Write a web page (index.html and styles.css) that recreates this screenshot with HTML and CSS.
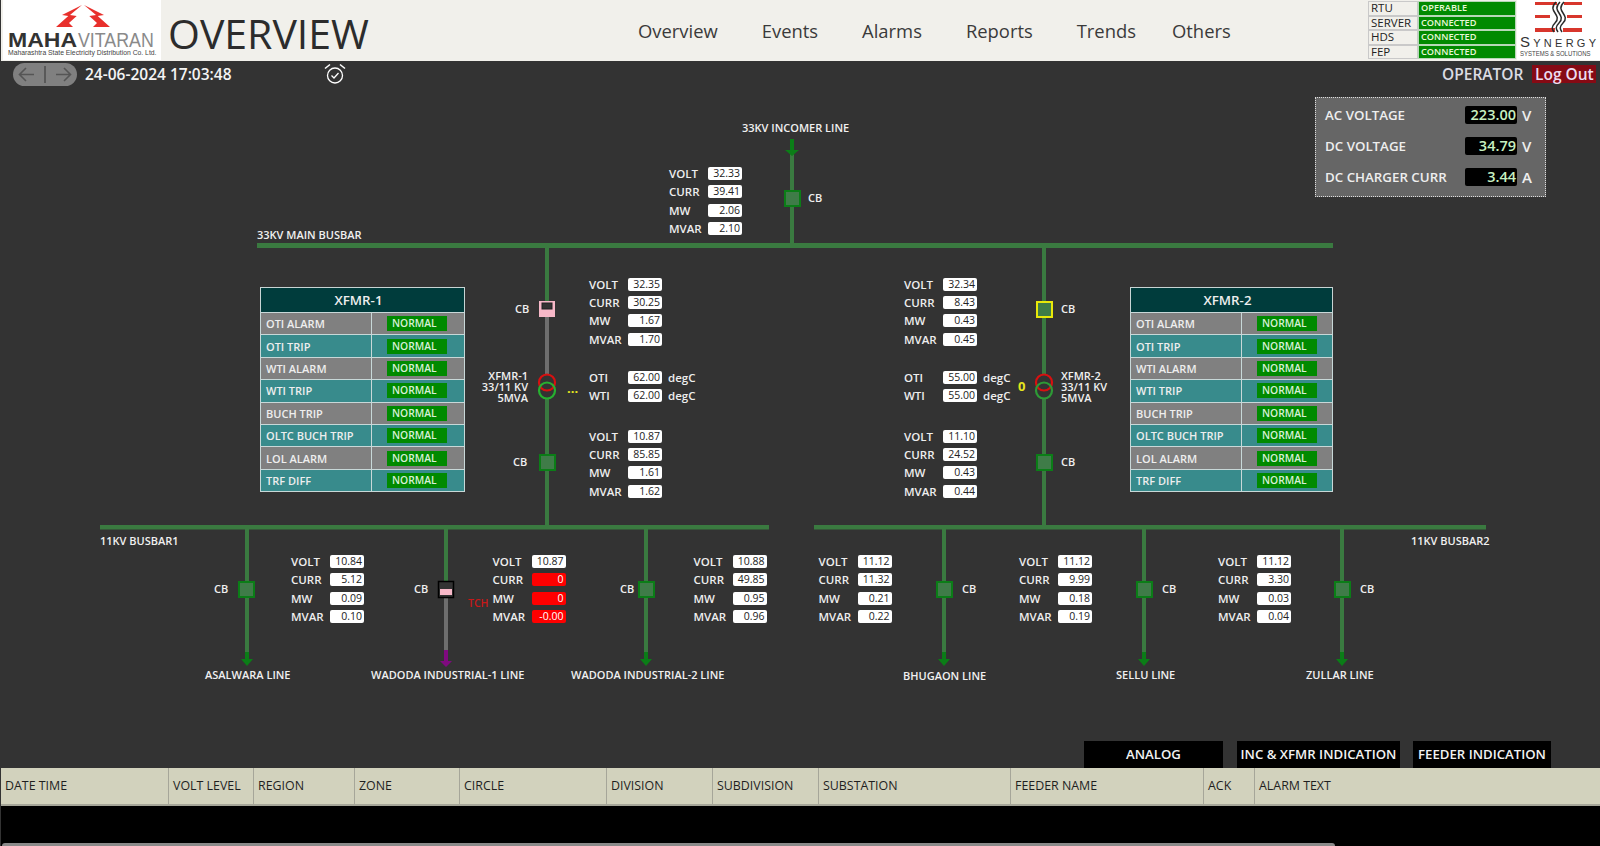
FILE: index.html
```html
<!DOCTYPE html>
<html lang="en">
<head>
<meta charset="utf-8">
<title>Overview</title>
<link rel="stylesheet" href="styles.css">
</head>
<body>
<div class="page">
  <header class="topbar">
    <svg class="logo" width="158" height="60" viewBox="0 0 158 60">
      <rect width="158" height="60" fill="#fff"/>
      <polygon fill="#e8302c" points="79,5 59,15 65.300,16 53,27 70,27 66,23 73.700,16 67,15"/>
      <polygon fill="#e8302c" points="81,5 101,15 94.700,16 107,27 90,27 94,23 86.300,16 93,15"/>
      <text class="maha" x="5" y="47" textLength="69" lengthAdjust="spacingAndGlyphs">MAHA</text>
      <text class="vitaran" transform="translate(75 47) scale(.89 1)">VITARAN</text>
      <text class="mahasub" x="5" y="55">Maharashtra State Electricity Distribution Co. Ltd.</text>
    </svg>
    <h1 class="title">OVERVIEW</h1>
    <nav class="nav">
      <a>Overview</a><a>Events</a><a>Alarms</a><a>Reports</a><a>Trends</a><a class="nav-last">Others</a>
    </nav>
    <div class="status">
      <span class="st-l">RTU</span><span class="st-v">OPERABLE</span>
      <span class="st-l">SERVER</span><span class="st-v">CONNECTED</span>
      <span class="st-l">HDS</span><span class="st-v">CONNECTED</span>
      <span class="st-l">FEP</span><span class="st-v">CONNECTED</span>
    </div>
    <svg class="synergy" width="83" height="60" viewBox="0 0 83 60">
      <rect width="83" height="60" fill="#fff"/>
      <g fill="#d8362c">
        <rect x="18" y="2" width="22" height="3"/><rect x="47" y="2" width="18" height="3"/>
        <rect x="18" y="15" width="15" height="3"/><rect x="50" y="15" width="15" height="3"/>
        <rect x="18" y="28" width="20" height="4"/><rect x="46" y="28" width="19" height="4"/>
      </g>
      <g fill="none" stroke="#2a2a2a" stroke-width="1.500">
        <path d="M39 2c-5 5-3 8-1 11s4 6 0 10-3 6-1 9"/>
        <path d="M43 2c-5 5-3 8-1 11s4 6 0 10-3 6-1 9"/>
        <path d="M47 2c-5 5-3 8-1 11s4 6 0 10-3 6-1 9"/>
      </g>
      <text class="syn1" x="3" y="47" textLength="76" lengthAdjust="spacing"><tspan class="syn1b">S</tspan>YNERGY</text>
      <text class="syn2" transform="translate(3 56) scale(.8 1)">SYSTEMS &amp; SOLUTIONS</text>
    </svg>
  </header>

  <div class="toolbar">
    <div class="pill">
      <svg width="64" height="23" viewBox="0 0 64 23">
        <g fill="none" stroke="#555" stroke-width="1.600">
          <path d="M21 11.500H7M13 5l-6.500 6.500L13 18"/>
          <path d="M32 3v17" stroke-width="1.800"/>
          <path d="M43 11.500h14M51 5l6.500 6.500L51 18"/>
        </g>
      </svg>
    </div>
    <span class="clock">24-06-2024 17:03:48</span>
    <svg class="alarm" width="24" height="24" viewBox="0 0 24 24">
      <g fill="none" stroke="#fff" stroke-width="1.300">
        <circle cx="12" cy="13.500" r="7.500"/>
        <path d="M8.500 13.500l2.500 2.500 4.500-5"/>
        <path d="M2 6.500l5-4M22 6.500l-5-4" stroke-width="1.600"/>
      </g>
    </svg>
    <span class="operator">OPERATOR</span>
    <span class="logout">Log Out</span>
  </div>

  <div class="spacer"></div>

  <div class="tabs">
    <span class="tab tab-analog">ANALOG</span>
    <span class="tab tab-inc">INC &amp; XFMR INDICATION</span>
    <span class="tab tab-feeder">FEEDER INDICATION</span>
  </div>

  <div class="alarmhead">
    <span>DATE TIME</span><span>VOLT LEVEL</span><span>REGION</span><span>ZONE</span><span>CIRCLE</span><span>DIVISION</span><span>SUBDIVISION</span><span>SUBSTATION</span><span>FEEDER NAME</span><span>ACK</span><span>ALARM TEXT</span>
  </div>
  <div class="alarmbody"><div class="scrollthumb"></div></div>

  <svg class="sld" width="1600" height="846" viewBox="0 0 1600 846">
    <g fill="#3a7a40">
      <rect x="257" y="243" width="1076" height="5"/>
      <rect x="100" y="525" width="669" height="4.500"/>
      <rect x="814" y="525" width="672" height="4.500"/>
      <rect x="790" y="153" width="4" height="90"/>
      <rect x="545" y="248" width="4" height="54"/>
      <rect x="545" y="398" width="4" height="127"/>
      <rect x="1042" y="248" width="4" height="127"/>
      <rect x="1042" y="398" width="4" height="127"/>
      <rect x="245" y="529" width="4" height="130"/>
      <rect x="444" y="529" width="4" height="54"/>
      <rect x="644" y="529" width="4" height="130"/>
      <rect x="942" y="529" width="4" height="130"/>
      <rect x="1142" y="529" width="4" height="130"/>
      <rect x="1340" y="529" width="4" height="130"/>
    </g>
    <rect x="545" y="316" width="4" height="59" fill="#6e6e6e"/>
    <rect x="444" y="596" width="4" height="56" fill="#6e6e6e"/>
    <g fill="#0b7d17">
      <path d="M790 139h4v11h5l-7 6-7-6h5z"/>
      <path d="M245 652h4v7h4l-6 7-6-7h4z"/>
      <path d="M644 652h4v7h4l-6 7-6-7h4z"/>
      <path d="M942 652h4v7h4l-6 7-6-7h4z"/>
      <path d="M1142 652h4v7h4l-6 7-6-7h4z"/>
      <path d="M1340 652h4v7h4l-6 7-6-7h4z"/>
    </g>
    <path d="M444 650h4v11h4l-6 6-6-6h4z" fill="#7f0a7f"/>
    <g class="cb">
      <rect x="785" y="191" width="15" height="15"/>
      <rect x="540" y="455" width="15" height="15"/>
      <rect x="1037" y="455" width="15" height="15"/>
      <rect x="239" y="582" width="15" height="15"/>
      <rect x="639" y="582" width="15" height="15"/>
      <rect x="937" y="582" width="15" height="15"/>
      <rect x="1137" y="582" width="15" height="15"/>
      <rect x="1335" y="582" width="15" height="15"/>
    </g>
    <rect x="1037" y="302" width="15" height="15" fill="#3f7c48" stroke="#e8e80a" stroke-width="2"/>
    <rect x="539" y="301" width="16" height="16" fill="#f7b8c8"/>
    <rect x="542" y="303" width="10" height="6" fill="#333" stroke="#222"/>
    <rect x="438.500" y="581.500" width="15" height="16" fill="#333" stroke="#000" stroke-width="1.500"/>
    <rect x="440" y="589" width="12" height="6" fill="#f7b8c8"/>
    <g fill="none" stroke-width="2.200">
      <circle cx="547" cy="382.500" r="8" stroke="#d81010"/>
      <circle cx="547" cy="390.500" r="8" stroke="#27b030"/>
      <circle cx="1044" cy="382.500" r="8" stroke="#d81010"/>
      <circle cx="1044" cy="390.500" r="8" stroke="#2e9a36"/>
    </g>
    <g class="lbl">
      <text x="742" y="132">33KV INCOMER LINE</text>
      <text x="257" y="239">33KV MAIN BUSBAR</text>
      <text x="100" y="545">11KV BUSBAR1</text>
      <text x="1411" y="545">11KV BUSBAR2</text>
      <text x="808" y="202">CB</text>
      <text x="515" y="313">CB</text>
      <text x="513" y="466">CB</text>
      <text x="1061" y="313">CB</text>
      <text x="1061" y="466">CB</text>
      <text x="214" y="593">CB</text>
      <text x="414" y="593">CB</text>
      <text x="620" y="593">CB</text>
      <text x="962" y="593">CB</text>
      <text x="1162" y="593">CB</text>
      <text x="1360" y="593">CB</text>
      <text x="205" y="679">ASALWARA LINE</text>
      <text x="371" y="679">WADODA INDUSTRIAL-1 LINE</text>
      <text x="571" y="679">WADODA INDUSTRIAL-2 LINE</text>
      <text x="903" y="680">BHUGAON LINE</text>
      <text x="1116" y="679">SELLU LINE</text>
      <text x="1306" y="679">ZULLAR LINE</text>
    </g>
    <text class="yel" x="567" y="393">...</text>
    <text class="yel" x="1018" y="391">0</text>
    <text class="tch" x="468" y="607">TCH</text>
  </svg>

  <div class="xlabel xl1">XFMR-1<br>33/11 KV<br>5MVA</div>
  <div class="xlabel xl2">XFMR-2<br>33/11 KV<br>5MVA</div>

  <div class="meas m-inc"><span>VOLT</span><b>32.33</b><span>CURR</span><b>39.41</b><span>MW</span><b>2.06</b><span>MVAR</span><b>2.10</b></div>
  <div class="meas m-t1u"><span>VOLT</span><b>32.35</b><span>CURR</span><b>30.25</b><span>MW</span><b>1.67</b><span>MVAR</span><b>1.70</b></div>
  <div class="meas m-t1t"><span>OTI</span><b>62.00</b><i>degC</i><span>WTI</span><b>62.00</b><i>degC</i></div>
  <div class="meas m-t1l"><span>VOLT</span><b>10.87</b><span>CURR</span><b>85.85</b><span>MW</span><b>1.61</b><span>MVAR</span><b>1.62</b></div>
  <div class="meas m-t2u"><span>VOLT</span><b>32.34</b><span>CURR</span><b>8.43</b><span>MW</span><b>0.43</b><span>MVAR</span><b>0.45</b></div>
  <div class="meas m-t2t"><span>OTI</span><b>55.00</b><i>degC</i><span>WTI</span><b>55.00</b><i>degC</i></div>
  <div class="meas m-t2l"><span>VOLT</span><b>11.10</b><span>CURR</span><b>24.52</b><span>MW</span><b>0.43</b><span>MVAR</span><b>0.44</b></div>
  <div class="meas m-f1"><span>VOLT</span><b>10.84</b><span>CURR</span><b>5.12</b><span>MW</span><b>0.09</b><span>MVAR</span><b>0.10</b></div>
  <div class="meas m-f2"><span>VOLT</span><b>10.87</b><span>CURR</span><b class="bad">0</b><span>MW</span><b class="bad">0</b><span>MVAR</span><b class="bad">-0.00</b></div>
  <div class="meas m-f3"><span>VOLT</span><b>10.88</b><span>CURR</span><b>49.85</b><span>MW</span><b>0.95</b><span>MVAR</span><b>0.96</b></div>
  <div class="meas m-f4"><span>VOLT</span><b>11.12</b><span>CURR</span><b>11.32</b><span>MW</span><b>0.21</b><span>MVAR</span><b>0.22</b></div>
  <div class="meas m-f5"><span>VOLT</span><b>11.12</b><span>CURR</span><b>9.99</b><span>MW</span><b>0.18</b><span>MVAR</span><b>0.19</b></div>
  <div class="meas m-f6"><span>VOLT</span><b>11.12</b><span>CURR</span><b>3.30</b><span>MW</span><b>0.03</b><span>MVAR</span><b>0.04</b></div>

  <table class="xfmr x1">
    <colgroup><col class="col-name"><col></colgroup>
    <thead><tr><th colspan="2">XFMR-1</th></tr></thead>
    <tbody>
      <tr><td>OTI ALARM</td><td><em>NORMAL</em></td></tr>
      <tr><td>OTI TRIP</td><td><em>NORMAL</em></td></tr>
      <tr><td>WTI ALARM</td><td><em>NORMAL</em></td></tr>
      <tr><td>WTI TRIP</td><td><em>NORMAL</em></td></tr>
      <tr><td>BUCH TRIP</td><td><em>NORMAL</em></td></tr>
      <tr><td>OLTC BUCH TRIP</td><td><em>NORMAL</em></td></tr>
      <tr><td>LOL ALARM</td><td><em>NORMAL</em></td></tr>
      <tr><td>TRF DIFF</td><td><em>NORMAL</em></td></tr>
    </tbody>
  </table>
  <table class="xfmr x2">
    <colgroup><col class="col-name"><col></colgroup>
    <thead><tr><th colspan="2">XFMR-2</th></tr></thead>
    <tbody>
      <tr><td>OTI ALARM</td><td><em>NORMAL</em></td></tr>
      <tr><td>OTI TRIP</td><td><em>NORMAL</em></td></tr>
      <tr><td>WTI ALARM</td><td><em>NORMAL</em></td></tr>
      <tr><td>WTI TRIP</td><td><em>NORMAL</em></td></tr>
      <tr><td>BUCH TRIP</td><td><em>NORMAL</em></td></tr>
      <tr><td>OLTC BUCH TRIP</td><td><em>NORMAL</em></td></tr>
      <tr><td>LOL ALARM</td><td><em>NORMAL</em></td></tr>
      <tr><td>TRF DIFF</td><td><em>NORMAL</em></td></tr>
    </tbody>
  </table>

  <div class="supply">
    <span>AC VOLTAGE</span><b>223.00</b><i>V</i>
    <span>DC VOLTAGE</span><b>34.79</b><i>V</i>
    <span>DC CHARGER CURR</span><b>3.44</b><i>A</i>
  </div>
</div>
</body>
</html>
```

FILE: styles.css
```css
* { box-sizing: border-box; }
html, body { margin: 0; padding: 0; background: #333; }
body { font-family: "Open Sans", "Liberation Sans", sans-serif; }

.page {
  position: relative;
  width: 1600px;
  height: 846px;
  overflow: hidden;
  display: flex;
  flex-direction: column;
  background: #333;
  padding-left: 1px;
}

/* header */
.topbar {
  height: 61px;
  flex: none;
  display: flex;
  align-items: flex-start;
  background: #f1f0eb;
}
.logo { margin-left: 2px; flex: none; }
.maha { font: 800 20px "Liberation Sans", sans-serif; fill: #333; }
.vitaran { font: 400 20px "Liberation Sans", sans-serif; fill: #8a8a8a; }
.mahasub { font: 400 6.800px "Liberation Sans", sans-serif; fill: #444; }
.syn1b { font-size: 15px; }
.title {
  margin: 6px 0 0 7px;
  width: 199px;
  flex: none;
  font-size: 41px;
  line-height: 54px;
  font-weight: 400;
  color: #2c2c2c;
  white-space: nowrap;
}
.nav {
  display: flex;
  gap: 44px;
  margin: 18px 0 0 271px;
  font-size: 18.400px;
  line-height: 26px;
  color: #3a3a3a;
}
.nav-last { margin-left: -8px; }
.status {
  width: 148px;
  margin: 1px 0 0 auto;
  display: grid;
  grid-template-columns: 50px 98px;
  grid-auto-rows: 14.500px;
  font-size: 11.500px;
  line-height: 12px;
  flex: none;
}
.st-l { border: 1px solid #c9c9c9; padding-left: 2px; color: #222; white-space: nowrap; }
.st-v {
  background: #008a00;
  border: 1px solid #b6d8b6;
  color: #e8f8d8;
  padding-left: 2px;
  font-size: 9.200px;
  font-weight: 600;
  white-space: nowrap;
}
.synergy { margin-left: 1px; flex: none; }
.syn1 { font: 400 11px "Liberation Sans", sans-serif; fill: #333; }
.syn2 { font: 400 7.500px "Liberation Sans", sans-serif; fill: #444; }

/* toolbar */
.toolbar {
  height: 26px;
  flex: none;
  display: flex;
  align-items: center;
  color: #fff;
  padding-left: 12px;
}
.pill {
  width: 64px;
  height: 23px;
  border-radius: 12px;
  background: #808080;
  flex: none;
  display: flex;
}
.clock {
  margin-left: 8px;
  width: 166px;
  font-size: 15.500px;
  font-weight: 600;
  white-space: nowrap;
  color: #f4f4f4;
}
.alarm { margin-left: 72px; flex: none; }
.operator {
  margin-left: 1095px;
  font-size: 15.500px;
  font-weight: 600;
  color: #dcdce4;
  white-space: nowrap;
}
.logout {
  margin-left: 9px;
  width: 64px;
  height: 18px;
  line-height: 18px;
  background: #860a14;
  color: #ecdcf0;
  font-size: 15.500px;
  font-weight: 600;
  text-align: center;
  white-space: nowrap;
  flex: none;
}
.spacer { flex: 1; }

/* tabs */
.tabs {
  display: flex;
  height: 27px;
  flex: none;
  padding-left: 1083px;
}
.tab {
  background: #000;
  color: #f2f2f2;
  font-size: 13.200px;
  font-weight: 600;
  line-height: 27px;
  text-align: center;
  white-space: nowrap;
}
.tab-analog { width: 139px; }
.tab-inc { width: 163px; margin-left: 14px; }
.tab-feeder { width: 138px; margin-left: 13px; }

/* alarm table */
.alarmhead {
  height: 38px;
  flex: none;
  display: grid;
  grid-template-columns: 168px 85px 101px 105px 147px 106px 106px 192px 193px 51px 1fr;
  background: #d2d2bd;
  border-bottom: 2px solid #a6a699;
  font-size: 12.400px;
  line-height: 36px;
  color: #1f1f1f;
}
.alarmhead span { padding-left: 4px; border-right: 1px solid #a6a699; white-space: nowrap; }
.alarmhead span:last-child { border-right: 0; }
.alarmbody { height: 40px; flex: none; background: #000; position: relative; }
.scrollthumb {
  position: absolute;
  left: 1px;
  bottom: 0;
  width: 1333px;
  height: 3px;
  background: #8a8a8a;
  border-radius: 3px 3px 0 0;
}

/* single line diagram */
.sld { position: absolute; left: 0; top: 0; }
.cb rect { fill: #3f7c48; stroke: #0b7d17; stroke-width: 2; }
.lbl text { font-family: "Open Sans", sans-serif; font-size: 11px; font-weight: 600; fill: #f0f0f0; }
.yel { font: 700 13px "Open Sans", sans-serif; fill: #e6e61e; }
.tch { font: 600 10.500px "Open Sans", sans-serif; fill: #c81818; }

.xlabel {
  position: absolute;
  top: 370px;
  font-size: 11px;
  font-weight: 600;
  line-height: 11px;
  color: #f0f0f0;
  white-space: nowrap;
}
.xl1 { right: 1072px; text-align: right; }
.xl2 { left: 1061px; }

.meas {
  position: absolute;
  display: grid;
  grid-template-columns: 39px 34px;
  grid-auto-rows: 18.300px;
  align-items: center;
  font-size: 11.500px;
  font-weight: 600;
  color: #eee;
}
.meas span { white-space: nowrap; }
.meas b {
  height: 13px;
  line-height: 13px;
  background: #fff;
  color: #222;
  font-size: 10.500px;
  font-weight: 400;
  text-align: right;
  padding-right: 2px;
  border-radius: 2px;
}
.meas b.bad { background: #f00; color: #fff; }
.meas i { font-style: normal; padding-left: 6px; }
.m-t1t, .m-t2t { grid-template-columns: 39px 34px 40px; }

.m-inc { left: 669px; top: 164.500px; }
.m-t1u { left: 589px; top: 275px; }
.m-t1t { left: 589px; top: 368px; }
.m-t1l { left: 589px; top: 427px; }
.m-t2u { left: 904px; top: 275px; }
.m-t2t { left: 904px; top: 368px; }
.m-t2l { left: 904px; top: 427px; }
.m-f1 { left: 291px; top: 552.500px; }
.m-f2 { left: 492.500px; top: 552.500px; }
.m-f3 { left: 693.500px; top: 552.500px; }
.m-f4 { left: 818.500px; top: 552.500px; }
.m-f5 { left: 1019px; top: 552.500px; }
.m-f6 { left: 1218px; top: 552.500px; }

.xfmr {
  position: absolute;
  top: 287px;
  border-collapse: collapse;
  table-layout: fixed;
  border: 1px solid #c8d4d4;
  font-size: 11px;
  font-weight: 600;
  color: #eee;
}
.x1 { left: 260px; width: 205px; }
.x2 { left: 1130px; width: 203px; }
.col-name { width: 111px; }
.xfmr th {
  height: 25px;
  background: #003c3c;
  color: #eee;
  font-size: 13.300px;
  font-weight: 600;
  padding: 0 8px 0 0;
}
.xfmr td {
  height: 22.400px;
  padding: 0 0 0 5px;
  border: 1px solid #c8d8d8;
  white-space: nowrap;
}
.xfmr tbody tr:nth-child(odd) td { background: #808080; }
.xfmr tbody tr:nth-child(even) td { background: #388b8c; }
.xfmr td:last-child { padding-left: 15px; }
.xfmr em {
  display: block;
  width: 60px;
  height: 15px;
  line-height: 15px;
  background: #008a00;
  color: #d8f0d8;
  font-style: normal;
  font-size: 10.300px;
  font-weight: 600;
  padding-left: 5px;
}

.supply {
  position: absolute;
  left: 1315px;
  top: 97px;
  width: 231px;
  height: 100px;
  padding: 1px 0 0 9px;
  background: #666;
  border: 1px dotted #ddd;
  display: grid;
  grid-template-columns: 140px 52px 1fr;
  grid-auto-rows: 31px;
  align-items: center;
  font-size: 13.300px;
  font-weight: 600;
  color: #eee;
}
.supply b {
  height: 18px;
  line-height: 17px;
  background: #000;
  color: #c8f0c0;
  font-size: 14.500px;
  font-weight: 600;
  text-align: right;
  border-radius: 2px;
  padding-right: 1px;
}
.supply i { font-style: normal; font-size: 15px; padding-left: 5px; }
```
